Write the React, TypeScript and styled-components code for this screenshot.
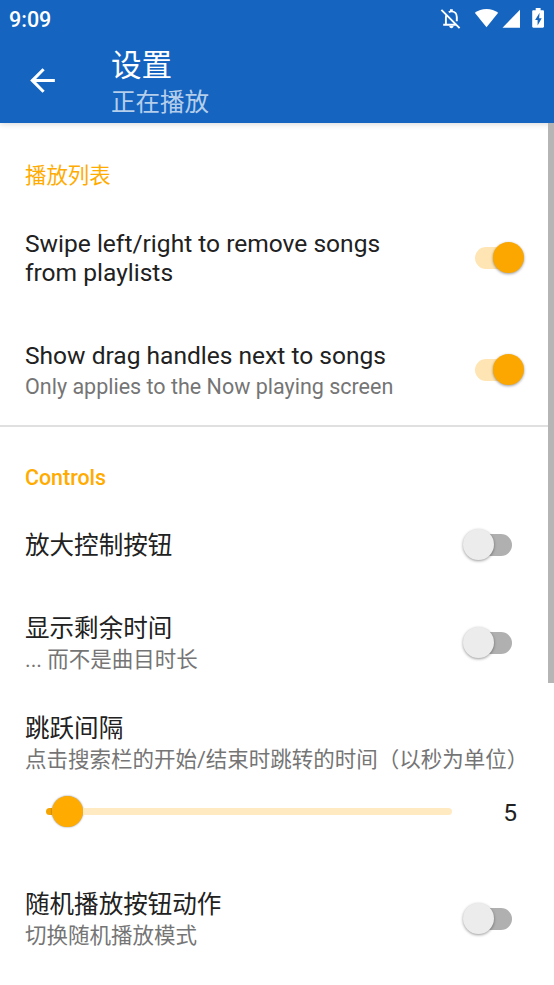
import { useState } from 'react'
import styled, { createGlobalStyle } from 'styled-components'

const Colors = {
  Primary: '#1565C0',
  Accent: '#FFAB00',
  Text: '#212121',
  TextSecondary: '#757575',
  Divider: '#E0E0E0',
  White: '#FFFFFF',
}

const App = () => {
  return (
    <Screen>
      <GlobalStyle />
      <AppBar>
        <StatusBar>
          <Clock>9:09</Clock>
          <StatusIcons />
        </StatusBar>
        <Toolbar>
          <BackButton aria-label="Back">
            <svg width="37" height="37" viewBox="0 0 24 24" fill="#fff">
              <path d="M20 11H7.83l5.59-5.59L12 4l-8 8 8 8 1.41-1.41L7.83 13H20v-2z" />
            </svg>
          </BackButton>
          <Heading>
            <Title>设置</Title>
            <Subtitle>正在播放</Subtitle>
          </Heading>
        </Toolbar>
      </AppBar>
      <Content>
        <Category $height={78} $weight={400}>
          播放列表
        </Category>
        <SwitchRow
          height={114}
          title={
            <>
              Swipe left/right to remove songs
              <br />
              from playlists
            </>
          }
          defaultOn
        />
        <SwitchRow
          height={110}
          title="Show drag handles next to songs"
          summary="Only applies to the Now playing screen"
          defaultOn
        />
        <Divider />
        <Category $height={76} $weight={500}>
          Controls
        </Category>
        <SwitchRow height={84} title="放大控制按钮" />
        <SwitchRow height={112} title="显示剩余时间" summary="... 而不是曲目时长" />
        <SeekRow />
        <SwitchRow height={110} title="随机播放按钮动作" summary="切换随机播放模式" />
        <Scrollbar />
      </Content>
    </Screen>
  )
}

interface SwitchRowProps {
  height: number
  title: React.ReactNode
  summary?: string
  defaultOn?: boolean
}

const SwitchRow = ({ height, title, summary, defaultOn = false }: SwitchRowProps) => {
  const [on, setOn] = useState(defaultOn)
  return (
    <Row $height={height}>
      <Labels $hasSummary={!!summary}>
        <RowTitle>{title}</RowTitle>
        {summary && <Summary>{summary}</Summary>}
      </Labels>
      <Switch role="switch" aria-checked={on} onClick={() => setOn(!on)}>
        <Track $on={on} />
        <Thumb $on={on} />
      </Switch>
    </Row>
  )
}

const SeekRow = () => {
  const value = 5
  return (
    <SeekWrapper>
      <RowTitle>跳跃间隔</RowTitle>
      <Summary>点击搜索栏的开始/结束时跳转的时间（以秒为单位）</Summary>
      <SeekLine>
        <SeekBar>
          <SeekProgress />
          <SeekThumb />
          <SeekTrack />
        </SeekBar>
        <SeekValue>{value}</SeekValue>
      </SeekLine>
    </SeekWrapper>
  )
}

const StatusIcons = () => (
  <svg width="108" height="24" viewBox="440 6 108 24">
    <g fill="none" stroke="#fff" strokeWidth="1.9">
      <path d="M446.6 14.6c-.6 1-.7 2-.7 3.2V24M448.8 12.2c.7-.5 1.5-.8 2.6-.8 3.3 0 5.4 2.4 5.4 5.6v4.2M443.2 24.7h13.6M441.4 9.8l18.2 18.4" />
    </g>
    <path d="M450 9.3h2.8v2.5H450zM449.3 26h4.2c0 1.3-.9 2.2-2.1 2.2s-2.1-.9-2.1-2.2z" fill="#fff" />
    <path d="M486.5 27.3 474.8 12.7c3.2-2.5 7.2-3.8 11.7-3.8s8.5 1.3 11.7 3.8z" fill="#fff" />
    <path d="M520 9.8V27.7H502.5z" fill="#fff" />
    <path
      fillRule="evenodd"
      d="M535.7 8h4.9v2.2h2.2c.7 0 1.2.5 1.2 1.2v15.2c0 .7-.5 1.2-1.2 1.2h-9.4c-.7 0-1.2-.5-1.2-1.2V11.4c0-.7.5-1.2 1.2-1.2h2.3zM539.6 12.8l-4.5 7.1h2.5v5.5l4.1-7.2h-2.6z"
      fill="#fff"
    />
  </svg>
)

const GlobalStyle = createGlobalStyle`
  * {
    box-sizing: border-box;
  }

  body {
    margin: 0;
    background: ${Colors.White};
    font-family: Roboto, 'Noto Sans CJK SC', sans-serif;
    color: ${Colors.Text};
  }

  button {
    padding: 0;
    border: 0;
    background: none;
  }
`

const Screen = styled.div`
  display: flex;
  flex-direction: column;
  width: 554px;
  height: 985px;
  overflow: hidden;
`

const AppBar = styled.header`
  flex-shrink: 0;
  height: 123px;
  background: ${Colors.Primary};
  color: ${Colors.White};
  box-shadow: 0 1px 6px rgba(0, 0, 0, 0.16);
`

const StatusBar = styled.div`
  display: flex;
  justify-content: space-between;
  height: 37px;
  padding: 6px 6px 0 9px;
`

const Clock = styled.span`
  font-size: 21.5px;
  font-weight: 500;
  line-height: 27px;
`

const Toolbar = styled.div`
  display: flex;
  height: 86px;
`

const BackButton = styled.button`
  display: flex;
  align-items: center;
  justify-content: center;
  width: 85px;
  height: 86px;
`

const Heading = styled.div`
  display: flex;
  flex-direction: column;
  padding: 10px 0 0 26px;
`

const Title = styled.h1`
  margin: 0;
  font-size: 30.6px;
  font-weight: 400;
  line-height: 38px;
`

const Subtitle = styled.span`
  font-size: 24.5px;
  line-height: 35px;
  color: rgba(255, 255, 255, 0.7);
`

const Content = styled.main`
  position: relative;
  display: flex;
  flex-direction: column;
`

const Category = styled.h2<{ $height: number; $weight: number }>`
  display: flex;
  align-items: flex-end;
  height: ${({ $height }) => $height}px;
  margin: 0;
  padding: 0 25px 12px;
  font-size: 21.4px;
  font-weight: ${({ $weight }) => $weight};
  line-height: 26px;
  color: ${Colors.Accent};
`

const Row = styled.div<{ $height: number }>`
  display: flex;
  align-items: center;
  justify-content: space-between;
  height: ${({ $height }) => $height}px;
  padding: 0 30px 0 25px;
`

const Labels = styled.div<{ $hasSummary: boolean }>`
  display: flex;
  flex-direction: column;
  padding-top: ${({ $hasSummary }) => ($hasSummary ? 2 : 0)}px;
`

const RowTitle = styled.span`
  font-size: 24.55px;
  line-height: 29px;
`

const Summary = styled.span`
  margin-top: 3px;
  font-size: 21.5px;
  line-height: 28px;
  white-space: nowrap;
  color: ${Colors.TextSecondary};
`

const Switch = styled.button`
  display: flex;
  align-items: center;
  width: 61px;
  height: 32px;
`

const Track = styled.span<{ $on: boolean }>`
  width: 37px;
  height: 22px;
  margin-left: 12px;
  border-radius: 11px;
  background: ${({ $on }) => ($on ? '#FFE5B3' : '#B0B0B0')};
`

const Thumb = styled.span<{ $on: boolean }>`
  width: 31px;
  height: 31px;
  margin-bottom: 1px;
  margin-left: ${({ $on }) => ($on ? -19 : -49)}px;
  border-radius: 50%;
  background: ${({ $on }) => ($on ? '#FBA700' : '#ECECEC')};
  box-shadow: 0 1px 3px rgba(0, 0, 0, 0.4);
`

const Divider = styled.div`
  height: 2px;
  background: ${Colors.Divider};
`

const SeekWrapper = styled.div`
  display: flex;
  flex-direction: column;
  height: 165px;
  padding: 15px 25px 0;
`

const SeekLine = styled.div`
  display: flex;
  align-items: center;
  justify-content: space-between;
  margin-top: 22px;
  padding: 0 12px 0 21px;
`

const SeekBar = styled.div`
  display: flex;
  align-items: center;
  width: 406px;
  height: 31px;
`

const SeekProgress = styled.div`
  width: 6px;
  height: 7px;
  border-radius: 3.5px 0 0 3.5px;
  background: #F5A400;
`

const SeekThumb = styled.div`
  width: 31px;
  height: 31px;
  border-radius: 50%;
  background: ${Colors.Accent};
  box-shadow: 0 0 2px rgba(0, 0, 0, 0.5);
`

const SeekTrack = styled.div`
  flex: 1;
  height: 7px;
  border-radius: 0 3.5px 3.5px 0;
  background: #FFEAC2;
`

const SeekValue = styled.span`
  padding-top: 2px;
  font-size: 24.6px;
  line-height: 29px;
`

const Scrollbar = styled.div`
  position: absolute;
  top: 0;
  right: 0;
  width: 6px;
  height: 560px;
  background: #B5B5B5;
`

export default App
